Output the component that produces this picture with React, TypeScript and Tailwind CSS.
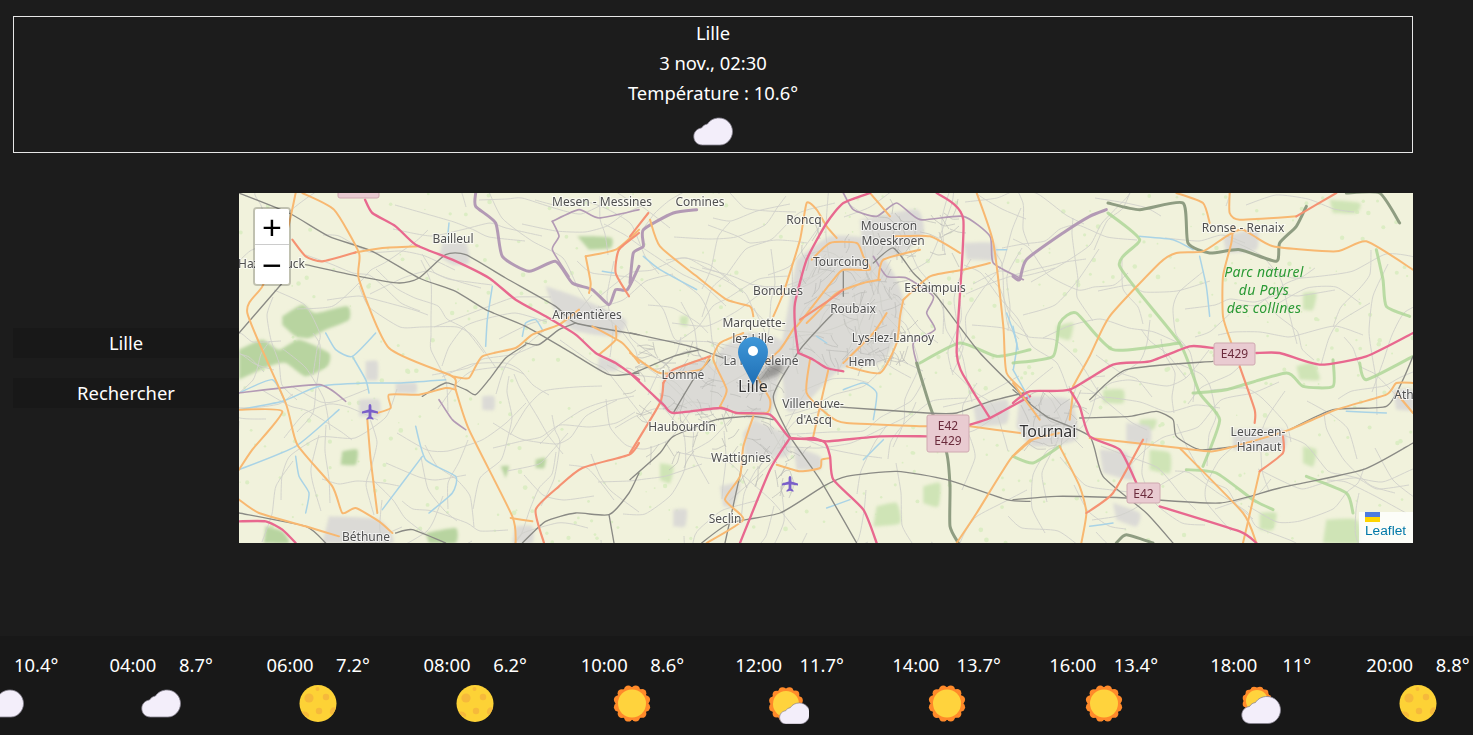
import React from "react";

// weather icons
const CLOUD = "M9.5 33C4 33 .8 29 .8 24.5 .8 20 4 16.5 8.5 16 10 13.5 12 12.5 14.5 12 17 8 21.5 6 26 6 33.5 6 39.5 12 39.5 19.5 39.5 27 33.5 33 27 33Z";

const Sun = ({ cx = 20, cy = 19.5, r = 14 }: { cx?: number; cy?: number; r?: number }) => (
    <g>
        <circle cx={cx} cy={cy} r={r + 2.5} fill="#ff8a2a" />
        {Array.from({ length: 12 }).map((_, i) => (
            <circle
                key={i}
                cx={cx + (r + 0.4) * Math.cos((i * Math.PI) / 6 + 0.26)}
                cy={cy + (r + 0.4) * Math.sin((i * Math.PI) / 6 + 0.26)}
                r={r * 0.3}
                fill="#ff8a2a"
            />
        ))}
        <circle cx={cx} cy={cy} r={r} fill="#ffd33d" />
    </g>
);

const WeatherIcon = ({ kind }: { kind: string }) => {
    return (
        <svg width="40" height="40" viewBox="0 0 40 40" className="block">
            {kind === "cloud" && <path d={CLOUD} fill="#f3eefa" stroke="#86838f" strokeWidth="0.8" />}
            {kind === "moon" && (
                <g>
                    <circle cx="20" cy="19.5" r="18.5" fill="#fdd236" />
                    <circle cx="11" cy="14" r="4.6" fill="#f6b93b" />
                    <circle cx="28" cy="13" r="3.2" fill="#f6b93b" />
                    <circle cx="19.5" cy="5" r="2" fill="#f6b93b" />
                    <circle cx="21" cy="27" r="3.2" fill="#f6b93b" />
                    <path d="M3.5 28a7 7 0 0 1 7.5 2 4 4 0 0 1-.5 3.5A18 18 0 0 1 3.500 28Z" fill="#f6b93b" />
                    <path d="M38 24a18 18 0 0 1-4 7 4 4 0 0 1 4-7Z" fill="#f6b93b" />
                </g>
            )}
            {kind === "sun" && <Sun />}
            {kind === "sun-small-cloud" && (
                <g>
                    <Sun cx={17} cy={20} r={13} />
                    <g transform="translate(10 14.300) scale(.78)">
                        <path d={CLOUD} fill="#f3eefa" stroke="#86838f" strokeWidth="0.9" />
                    </g>
                </g>
            )}
            {kind === "sun-cloud" && (
                <g>
                    <Sun cx={16} cy={17} r={11} />
                    <path d={CLOUD} transform="translate(0 6.500)" fill="#f3eefa" stroke="#86838f" strokeWidth="0.8" />
                </g>
            )}
        </svg>
    );
};

const forecast = [
    { time: "02:00", temp: "10.4°", icon: "cloud" },
    { time: "04:00", temp: "8.7°", icon: "cloud" },
    { time: "06:00", temp: "7.2°", icon: "moon" },
    { time: "08:00", temp: "6.2°", icon: "moon" },
    { time: "10:00", temp: "8.6°", icon: "sun" },
    { time: "12:00", temp: "11.7°", icon: "sun-small-cloud" },
    { time: "14:00", temp: "13.7°", icon: "sun" },
    { time: "16:00", temp: "13.4°", icon: "sun" },
    { time: "18:00", temp: "11°", icon: "sun-cloud" },
    { time: "20:00", temp: "8.8°", icon: "moon" },
];

// catmull-rom through a "x,y x,y" list
const smooth = (line: string) => {
    const p = line.trim().split(/\s+/).map((s) => s.split(",").map(Number));
    let d = `M${p[0][0]} ${p[0][1]}`;
    for (let i = 0; i < p.length - 1; i++) {
        const a = p[i - 1] || p[i];
        const b = p[i];
        const c = p[i + 1];
        const e = p[i + 2] || c;
        const k = 0.1;
        d += `C${(b[0] + (c[0] - a[0]) * k).toFixed(1)} ${(b[1] + (c[1] - a[1]) * k).toFixed(1)} ${(c[0] - (e[0] - b[0]) * k).toFixed(1)} ${(c[1] - (e[1] - b[1]) * k).toFixed(1)} ${c[0]} ${c[1]}`;
    }
    return d;
};

interface Panel {
    dx: number;
    green: string[];
    urban: string[];
    water: string[];
    park: string[];
    purple: string[];
    dark: string[];
    rail: string[];
    orange: string[];
    salmon: string[];
    pink: string[];
}

const panels: Panel[] = [
    {
        dx: 0,
        green: [
            "0,470 70,440 120,470 180,440 270,480 265,520 200,550 140,510 90,520 0,560",
            "130,370 190,335 230,360 325,340 330,380 260,410 210,435 170,430 130,395",
            "1015,130 1060,130 1118,135 1115,165 1050,170",
            "560,1020 650,1005 650,1050 570,1050",
            "80,1000 130,1015 150,1050 75,1050",
            "310,775 355,770 350,815 305,815",
            "785,820 810,820 800,855",
            "890,800 920,795 915,825 890,825",
        ],
        urban: [
            "610,150 680,150 690,210 640,215 600,190",
            "360,620 420,620 420,670 360,670",
            "470,570 530,570 530,600 470,600",
            "730,610 765,610 765,650 730,650",
            "920,280 1010,310 1160,380 1130,430 1000,410 940,340",
            "1080,490 1140,510 1130,535 1075,530",
            "270,970 420,980 460,1050 250,1050",
            "830,1000 880,1000 880,1050 820,1050",
            "380,505 415,505 415,560 380,560",
        ],
        water: [
            "260,420 290,470 340,490 410,420",
            "340,490 380,560 390,600",
            "0,650 130,625 240,580 380,570 480,570 620,560",
            "0,600 100,560 140,630",
            "760,280 745,380 740,460",
            "530,700 560,800 650,850 640,900 570,960",
            "550,790 430,950",
            "0,830 170,760 300,650",
            "170,790 180,850 210,900 200,960",
            "850,430 860,390 890,380 910,410",
            "630,90 625,140",
            "1090,235 1125,240",
        ],
        park: [],
        purple: [
            "710,0 710,40 770,90 790,190 870,235 950,205 1000,270 1060,290 1110,335 1130,290 1165,290 1200,220",
            "940,85 960,130 940,170 990,250",
            "940,85 1020,50 1080,75 1200,50",
            "0,600 240,575 320,625",
            "600,620 640,680 680,710",
        ],
        dark: [],
        rail: [
            "0,0 150,60 270,130 400,175 540,255 650,295 740,350 860,400 990,475 1110,545 1200,540",
            "200,215 360,250 480,270 540,255 620,185 680,185 800,255 950,340 1010,390 1200,425",
            "0,420 130,270",
            "860,450 900,455 960,410 1010,390",
            "550,610 620,570 680,590 710,605 750,560 800,495 860,455",
            "0,960 200,1000 260,1050",
            "470,1020 520,1010 620,1050",
            "850,1050 920,985 1010,960 1110,965 1170,900 1200,840",
            "1110,965 1125,1050",
        ],
        orange: [
            "190,0 285,50 360,180 360,260 450,465 640,550 650,590 690,710 820,970 830,1050",
            "170,0 140,130 70,280 25,360 140,630 175,755 280,880 310,960 350,945 420,985 460,1020",
            "0,650 130,655 40,770 0,830",
            "350,178 430,165 540,160",
            "385,680 395,800 415,960",
            "415,660 455,645 450,605 540,605 620,585 650,590",
            "640,550 690,555 730,490 830,465 880,425 960,395 1020,350",
            "1040,190 1055,270 1050,300",
            "1040,190 1130,170 1200,110",
            "1060,400 1150,450 1200,510",
            "1130,400 1130,440 1080,485",
            "0,920 60,960 200,1000 300,1030",
            "815,975 880,985",
        ],
        salmon: [
            "160,140 200,190 250,205 350,178",
            "1200,750 1170,785 1030,825 960,880 890,950 915,1050",
            "1200,120 1140,170 1130,240 1170,310",
        ],
        pink: [
            "378,20 400,60 470,100 530,155 640,200 750,255 830,320 920,370 1010,425 1070,480 1130,510 1200,560",
            "0,985 80,985 130,1010 170,1050",
        ],
    },
    {
        dx: 391,
        green: [
            "740,940 800,930 810,990 730,1000",
            "90,810 130,820 120,870 90,860",
            "150,370 175,370 170,400 150,395",
            "880,880 930,870 925,940 880,930",
        ],
        urban: [
            "270,470 350,420 460,450 430,640 390,680 270,640 250,540",
            "100,540 240,500 270,640 130,660 90,630",
            "500,200 600,130 720,140 790,240 820,320 800,440 750,510 630,530 520,640 470,650 450,480",
            "690,80 860,50 880,130 800,190 700,190",
            "1000,150 1090,150 1100,200 1010,200",
            "370,680 480,730 470,790 350,790 340,720",
            "490,760 570,790 570,830 500,830",
            "1030,640 1130,620 1130,690 1040,700",
            "270,880 330,870 310,940 280,940",
            "130,950 170,950 165,1000 130,1000",
        ],
        water: [
            "40,190 90,230 200,290",
            "640,590 700,570 740,600 730,680",
            "560,430 590,450",
            "1100,170 1130,170",
            "1130,360 1160,450 1150,530",
            "700,800 760,740",
            "590,945 660,920",
        ],
        park: ["870,510 990,450 1100,490 1200,470"],
        purple: [
            "0,270 10,180 40,160 40,110 130,60 200,50",
            "640,0 670,50 740,70 800,30 870,80 1000,70 1080,130 1090,210 1180,260",
            "730,190 770,250 830,255 910,310 890,360 915,410 850,450 860,510",
        ],
        dark: ["860,510 900,640 950,780 960,880 960,1000 985,1050"],
        rail: [
            "0,420 180,460 280,495",
            "0,545 130,490 210,470",
            "600,640 890,660 980,660 1080,625 1200,595",
            "0,860 90,780 130,730 260,680 370,670 430,680",
            "130,660 190,560 240,500",
            "610,360 510,470 430,610 480,730 570,860 680,1050",
            "215,1050 300,990 450,960 580,880 650,850 800,835 950,860 1130,920 1200,925",
            "640,235 640,310",
            "730,210 790,165 850,240 920,310 1050,480 1200,630",
            "285,1050 340,800",
        ],
        orange: [
            "60,80 90,160 200,250 290,320 360,340 370,370",
            "270,640 290,590 250,500 270,450 340,420",
            "270,640 320,660 410,660 420,620 380,540 450,470 495,400",
            "430,370 460,300 510,140 530,30 560,50 590,100 620,135",
            "545,200 600,150 680,150 700,190 720,230 640,230 610,260 540,350 500,400",
            "750,260 700,270 620,300 570,350 530,390",
            "745,260 760,200 870,170",
            "820,320 810,370 800,450 750,540 650,520",
            "770,360 730,420 640,510",
            "540,500 530,600 600,670 650,690 890,700",
            "595,530 570,640 550,730",
            "370,670 340,760 330,850 285,920 340,980 230,1050",
            "440,815 510,835 570,825 575,800 600,795",
            "1040,0 1090,150 1120,400 1130,540 1200,610",
            "1020,700 1170,720",
            "820,320 900,250 1000,230 1080,210",
            "790,130 900,130 990,180",
            "0,480 90,540 210,530 240,490",
            "980,1050 1040,960 1140,800 1200,740",
            "720,0 780,70",
        ],
        salmon: [
            "100,570 90,630 0,780",
            "240,490 130,530 100,570",
            "55,60 0,130",
            "510,380 600,320 640,290",
        ],
        pink: [
            "0,540 100,635 130,660 270,645 320,660 420,665 480,735 550,735 590,745 750,730 890,730",
            "330,1050 420,830 480,735",
            "480,735 580,745 600,790 610,860 700,950 740,1050",
            "1020,695 1080,675 1200,610",
            "1080,675 1020,580 980,480 1000,80 920,0",
            "505,480 495,400 495,330 530,200 590,90 640,30 720,0",
            "505,480 550,500 590,525 640,535",
        ],
    },
    {
        dx: 774,
        green: [
            "950,20 1040,30 1030,60 960,60",
            "410,770 470,780 470,840 410,830",
            "270,590 330,590 330,630 270,630",
            "380,680 430,680 420,710 380,710",
            "850,520 900,510 920,560 860,560",
            "940,980 1030,980 1040,1050 930,1050",
            "130,400 180,390 170,440 130,430",
            "740,960 790,960 780,1010 740,1010",
            "870,300 910,300 900,350 870,350",
            "870,760 910,770 900,820 870,810",
        ],
        urban: [
            "20,610 170,620 190,740 60,760 10,700",
            "260,770 340,780 360,860 270,840",
            "340,690 410,700 410,750 340,750",
            "630,130 730,110 730,170 640,180",
            "1140,590 1200,590 1200,650 1150,650",
            "660,710 810,710 810,770 660,770",
            "300,930 380,960 370,1000 310,980",
        ],
        water: [
            "0,400 15,470",
            "560,190 580,280 590,370",
            "380,130 480,140 540,170",
            "1120,660 1000,655",
            "0,530 50,620",
            "230,1000 300,990",
        ],
        park: [
            "285,60 380,140 320,220 500,450 560,600 620,680 570,820",
            "0,510 120,490 140,390 190,360 300,470 500,450",
            "540,600 640,590 820,540 870,580 960,580 960,500",
            "880,850 1000,900 1020,960",
            "1090,170 1110,260 1120,340 1190,370",
            "1040,510 1060,560 1200,490",
            "0,790 60,810 140,760",
            "520,830 610,840 720,920 780,950",
        ],
        purple: [
            "280,50 230,70 150,120 40,200 20,260 0,250",
        ],
        dark: [
            "285,30 380,50 510,30 525,150 590,180 680,170 790,205 800,150 850,100 880,40",
            "1000,0 1100,0 1160,90",
            "310,1050 340,1025 420,1050",
        ],
        rail: [
            "0,920 130,910 340,915 620,930 800,885 1050,830 1200,750",
            "200,675 350,670 430,655 480,680 490,730 560,770 670,760",
            "0,590 100,670 230,730 270,850 400,960 480,1050",
            "830,710 960,650 1120,640 1170,560 1200,490",
            "230,620 340,530 600,505",
        ],
        orange: [
            "180,580 230,490 290,370 440,210 490,180 570,175 640,130 690,110 780,160 970,175 1060,145 1200,230",
            "230,735 500,765 600,775 700,750 830,710 970,650 1120,605 1150,570 1200,570",
            "500,765 690,960 730,1050",
            "740,835 690,1050",
            "140,760 200,880 220,960 205,1050",
            "490,0 570,30 590,90",
            "650,0 650,60 680,80 850,70",
            "655,450 630,370 630,250 655,150 660,100",
            "0,790 60,740 140,720",
            "1150,600 1200,660",
            "0,570 80,680",
            "180,600 170,680",
        ],
        salmon: [
            "680,520 725,650 725,690",
            "810,730 810,780 740,835",
            "220,960 300,900 390,740",
            "850,70 970,0",
        ],
        pink: [
            "0,630 50,595 170,590 300,515 410,505 530,460 600,465",
            "730,480 800,480 920,515 1060,490 1200,420",
            "170,590 200,640 230,730 320,770 370,870",
            "440,940 680,1015 730,1050",
        ],
    },
];

const labels: [string, number, number][] = [
    ["Mesen - Messines", 602, 206],
    ["Comines", 700, 206],
    ["Roncq", 804, 224],
    ["Mouscron", 889, 230],
    ["Moeskroen", 893, 245],
    ["Bailleul", 453, 243],
    ["Ronse - Renaix", 1243, 232],
    ["Tourcoing", 841, 266],
    ["Estaimpuis", 935, 292],
    ["Bondues", 778, 295],
    ["Roubaix", 853, 313],
    ["Armentières", 587, 319],
    ["Marquette-", 754, 327],
    ["lez-Lille", 753, 343],
    ["Lys-lez-Lannoy", 893, 342],
    ["La Madeleine", 761, 365],
    ["Hem", 862, 366],
    ["Lomme", 683, 379],
    ["Villeneuve-", 813, 408],
    ["d'Ascq", 814, 424],
    ["Haubourdin", 682, 431],
    ["Wattignies", 741, 462],
    ["Leuze-en-", 1258, 436],
    ["Hainaut", 1259, 451],
    ["Seclin", 725, 523],
    ["Béthune", 366, 541],
    ["Ath", 1404, 399],
];

// deterministic filler so the tile has its small roads and fields
const rand = (() => {
    let s = 4127;
    return () => {
        s = (s * 1664525 + 1013904223) % 4294967296;
        return s / 4294967296;
    };
})();

const wander = (x0: number, y0: number, steps: number, min: number, max: number) => {
    let x = x0;
    let y = y0;
    let a = rand() * 6.28;
    const pts = [`${x.toFixed(0)},${y.toFixed(0)}`];
    for (let i = 0; i < steps; i++) {
        a += (rand() - 0.5) * 1.3;
        const len = min + rand() * (max - min);
        x += Math.cos(a) * len;
        y += Math.sin(a) * len;
        pts.push(`${x.toFixed(0)},${y.toFixed(0)}`);
    }
    return pts.join(" ");
};

const minorRoads = Array.from({ length: 230 }).map(() =>
    wander(rand() * 1174, rand() * 350, 3 + Math.floor(rand() * 4), 14, 38)
);

const cities = [
    [395, 150, 140, 110, 90],
    [560, 40, 110, 130, 90],
    [785, 205, 55, 50, 30],
    [650, 20, 70, 40, 20],
    [505, 260, 60, 35, 20],
];

const streets = cities.flatMap(([x, y, w, h, n]) =>
    Array.from({ length: n }).map(() => wander(x + rand() * w, y + rand() * h, 2, 5, 11))
);

const specks = Array.from({ length: 520 }).map(() => ({
    x: rand() * 1174,
    y: rand() * 350,
    r: 0.7 + rand() * 1.7,
}));

const Plane = ({ x, y }: { x: number; y: number }) => (
    <path
        transform={`translate(${x} ${y})`}
        d="M0-8C.9-8 1.4-6.800 1.400-5.500V-2.500L8-.5V1.500L1.400 .5V4.500L3.500 6.500V7.800L0 6.800-3.500 7.800V6.500L-1.400 4.500V.5L-8 1.500V-.5L-1.400-2.500V-5.500C-1.400-6.800-.9-8 0-8Z"
        fill="#7a5fc9"
    />
);

const Shield = ({ x, y, w, h, lines }: { x: number; y: number; w: number; h: number; lines: string[] }) => (
    <g>
        <rect x={x} y={y} width={w} height={h} rx="2" fill="#e9cbd1" stroke="#cfa8b0" />
        {lines.map((l, i) => (
            <text key={l} x={x + w / 2} y={y + 15 + i * 15} textAnchor="middle" fontSize="12" fill="#6b2b3c">
                {l}
            </text>
        ))}
    </g>
);

const MapTile = () => (
    <svg viewBox="0 0 1174 350" className="block w-full h-full blur-[0.4px] font-['Noto_Sans',sans-serif]">
        <defs>
            <filter id="soft" x="-10%" y="-10%" width="120%" height="120%">
                <feGaussianBlur stdDeviation="1.400" />
            </filter>
        </defs>
        <rect width="1174" height="350" fill="#f1f2dc" />
        {specks.map((s, i) => (
            <circle key={i} cx={s.x} cy={s.y} r={s.r} fill="#dcedc4" />
        ))}
        <g filter="url(#soft)">
            {panels.map((p) => (
                <g key={p.dx} transform={`translate(${p.dx} 0) scale(${1 / 3})`}>
                    {p.green.map((g, i) => (
                        <path key={i} d={smooth(g) + "Z"} fill={p.dx === 0 ? "#b8d4a0" : "#cfe4b6"} />
                    ))}
                    {p.urban.map((g, i) => (
                        <path key={i} d={smooth(g) + "Z"} fill="#dbdad6" />
                    ))}
                </g>
            ))}
        </g>
        {minorRoads.map((r, i) => (
            <path key={i} d={smooth(r)} fill="none" stroke="#d0d0cb" strokeWidth="0.9" />
        ))}
        {streets.map((r, i) => (
            <path key={i} d={smooth(r)} fill="none" stroke="#bcbcb8" strokeWidth="0.7" />
        ))}
        {panels.map((p) => (
            <g key={p.dx} transform={`translate(${p.dx} 0) scale(${1 / 3})`} fill="none" strokeLinejoin="round" strokeLinecap="round">
                {p.water.map((d, i) => (
                    <path key={i} d={smooth(d)} stroke="#a9d3e6" strokeWidth="4.500" />
                ))}
                {p.park.map((d, i) => (
                    <path key={i} d={smooth(d)} stroke="#abd595" strokeWidth="9" strokeOpacity="0.8" />
                ))}
                {p.purple.map((d, i) => (
                    <path key={i} d={smooth(d)} stroke="#b39ab5" strokeWidth={i === 0 ? 9 : 5} />
                ))}
                {p.dark.map((d, i) => (
                    <path key={i} d={smooth(d)} stroke="#8f9d82" strokeWidth="9" />
                ))}
                {p.rail.map((d, i) => (
                    <path key={i} d={smooth(d)} stroke="#8a8a85" strokeWidth="4" />
                ))}
                {p.orange.map((d, i) => (
                    <path key={i} d={smooth(d)} stroke="#f8b871" strokeWidth="6" />
                ))}
                {p.salmon.map((d, i) => (
                    <path key={i} d={smooth(d)} stroke="#f59273" strokeWidth="6.500" />
                ))}
                {p.pink.map((d, i) => (
                    <path key={i} d={smooth(d)} stroke="#e8688f" strokeWidth="7" />
                ))}
            </g>
        ))}
        <Plane x={131} y={219} />
        <Plane x={551} y={291} />
        <Shield x={99} y={-14} w={41} h={19} lines={[""]} />
        <Shield x={688} y={222} w={42} h={37} lines={["E42", "E429"]} />
        <Shield x={975} y={150} w={41} h={22} lines={["E429"]} />
        <Shield x={888} y={290} w={33} h={20} lines={["E42"]} />
        <g textAnchor="middle" fontSize="12" fill="#505050" stroke="#ffffff" strokeOpacity="0.65" strokeWidth="2" paintOrder="stroke">
            {labels.map(([t, x, y]) => (
                <text key={t} x={x - 239} y={y - 193}>
                    {t}
                </text>
            ))}
            <text x="-1" y="75" textAnchor="start">Hazebrouck</text>
            <text x="514" y="199" fontSize="16" fill="#333333">Lille</text>
            <text x="809" y="244" fontSize="16" fill="#333333">Tournai</text>
        </g>
        <g textAnchor="middle" fontSize="14" fontStyle="italic" fill="#2b9a35" letterSpacing="0.3">
            <text x="1025" y="84">Parc naturel</text>
            <text x="1025" y="102">du Pays</text>
            <text x="1025" y="120">des collines</text>
        </g>
    </svg>
);

const Marker = () => (
    <svg viewBox="0 0 50 66" className="absolute left-[499px] top-[144px] w-[50px] h-[66px]">
        <defs>
            <linearGradient id="pin" x1="0" y1="0" x2="0" y2="1">
                <stop offset="0" stopColor="#3f97d8" />
                <stop offset="1" stopColor="#1f6fb5" />
            </linearGradient>
            <filter id="pinShadow" x="-30%" y="-30%" width="160%" height="160%">
                <feGaussianBlur stdDeviation="2.500" />
            </filter>
        </defs>
        <path d="M15 48 L32 28 Q44 24 46 30 Q44 38 34 40Z" fill="#333333" fillOpacity="0.4" filter="url(#pinShadow)" />
        <path d="M15 0C6.700 0 0 6.700 0 15 0 19 1.500 22 3 25L15 48 27 25C28.500 22 30 19 30 15 30 6.700 23.300 0 15 0Z" fill="url(#pin)" />
        <circle cx="15" cy="14" r="5" fill="#ffffff" />
    </svg>
);

const App = () => {
    return (
        <div className="h-[735px] w-full overflow-hidden bg-[#1c1c1c] text-white font-['Noto_Sans',sans-serif] text-[18.4px] leading-[30px]">
            <div className="pt-4 pl-[13px] pr-[60px]">
                <div className="h-[137px] pt-px border border-[#e6e6e6] text-center flex flex-col items-center">
                    <div>Lille</div>
                    <div>3 nov., 02:30</div>
                    <div>Température : 10.6°</div>
                    <div className="mt-1">
                        <WeatherIcon kind="cloud" />
                    </div>
                </div>

                <div className="mt-10 flex items-center h-[350px]">
                    <div className="w-[226px] shrink-0 flex flex-col gap-5">
                        <input
                            readOnly
                            value="Lille"
                            className="h-[30px] w-full bg-[#181818] text-center text-white outline-none"
                        />
                        <button className="h-[30px] w-full bg-[#181818] text-center text-white">Rechercher</button>
                    </div>
                    <div className="relative flex-1 h-full overflow-hidden">
                        <MapTile />
                        <Marker />
                        <div className="absolute left-[14px] top-[14px] w-[38px] rounded-[4px] border-2 border-[#0003] bg-clip-padding">
                            <div className="h-[36px] bg-white rounded-t-[2px] border-b border-[#ccc] text-black flex items-center justify-center font-['Liberation_Sans',sans-serif] text-[34px] leading-none">
                                +
                            </div>
                            <div className="h-[39px] bg-white rounded-b-[2px] text-black flex items-center justify-center font-['Liberation_Sans',sans-serif] text-[34px] leading-none">
                                −
                            </div>
                        </div>
                        <div className="absolute right-0 bottom-0 w-[54px] h-[31px] bg-white/80 pl-[6px] flex flex-col">
                            <div className="w-[15px] h-[10px] flex flex-col">
                                <div className="h-[5px] bg-[#4c7be0]" />
                                <div className="h-[5px] bg-[#ffd500]" />
                            </div>
                            <a className="text-[13.7px] leading-[18px] text-[#0078a8] font-['Liberation_Sans',sans-serif]">Leaflet</a>
                        </div>
                    </div>
                </div>
            </div>

            <div className="mt-[93px] h-[99px] bg-[#181818] pt-[14px] overflow-hidden">
                <div className="flex gap-[31.1px] ml-[-59px]">
                    {forecast.map((f) => (
                        <div key={f.time} className="w-[126px] shrink-0 flex flex-col">
                            <div className="flex justify-around">
                                <span>{f.time}</span>
                                <span>{f.temp}</span>
                            </div>
                            <div className="flex justify-center mt-1">
                                <WeatherIcon kind={f.icon} />
                            </div>
                        </div>
                    ))}
                </div>
            </div>
        </div>
    );
};

export default App;
